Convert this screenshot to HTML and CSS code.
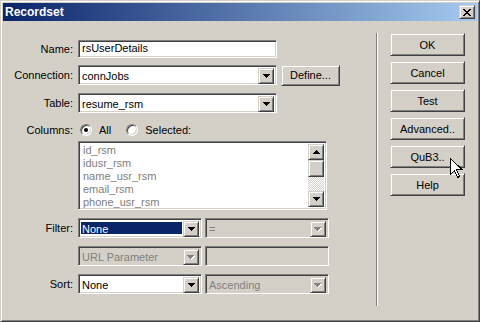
FILE: index.html
```html
<!DOCTYPE html>
<html lang="en">
<head>
    <meta charset="UTF-8">
    <meta name="viewport" content="width=device-width, initial-scale=1.0">
    <title>Recordset</title>
    <link rel="stylesheet" href="styles.css">
</head>
<body>
    <div class="window">
        <div class="titlebar">
            <span class="title">Recordset</span>
            <div class="close-btn raised">
                <svg width="8" height="7" viewBox="0 0 8 7" shape-rendering="crispEdges"><path d="M0 0h2v1h1v1h2v-1h1v-1h2v1h-1v1h-1v1h-1v1h1v1h1v1h1v1h-2v-1h-1v-1h-2v1h-1v1h-2v-1h1v-1h1v-1h1v-1h-1v-1h-1v-1h-1z" fill="#000"/></svg>
            </div>
        </div>

        <div class="dialog">
            <div class="form">
                <div class="row row-name">
                    <span class="label">Name:</span>
                    <div class="textbox sunken">rsUserDetails</div>
                </div>

                <div class="row row-select">
                    <span class="label">Connection:</span>
                    <div class="select sunken wide">
                        <span class="value">connJobs</span>
                        <span class="drop raised"><svg width="7" height="4" viewBox="0 0 7 4" shape-rendering="crispEdges"><path d="M0 0h7v1h-1v1h-1v1h-1v1h-1v-1h-1v-1h-1v-1h-1z"/></svg></span>
                    </div>
                    <div class="btn raised btn-define">Define...</div>
                </div>

                <div class="row row-select">
                    <span class="label">Table:</span>
                    <div class="select sunken wide">
                        <span class="value">resume_rsm</span>
                        <span class="drop raised"><svg width="7" height="4" viewBox="0 0 7 4" shape-rendering="crispEdges"><path d="M0 0h7v1h-1v1h-1v1h-1v1h-1v-1h-1v-1h-1v-1h-1z"/></svg></span>
                    </div>
                </div>

                <div class="row row-columns">
                    <span class="label">Columns:</span>
                    <span class="radio checked"></span>
                    <span class="radio-text">All</span>
                    <span class="radio"></span>
                    <span class="radio-text">Selected:</span>
                </div>

                <div class="row row-list">
                    <span class="label"></span>
                    <div class="listbox sunken">
                        <div class="items">
                            <div>id_rsm</div>
                            <div>idusr_rsm</div>
                            <div>name_usr_rsm</div>
                            <div>email_rsm</div>
                            <div>phone_usr_rsm</div>
                        </div>
                        <div class="scrollbar">
                            <span class="scroll-btn raised"><svg width="7" height="4" viewBox="0 0 7 4" shape-rendering="crispEdges"><path d="M3 0h1v1h1v1h1v1h1v1h-7v-1h1v-1h1v-1h1z"/></svg></span>
                            <span class="thumb raised"></span>
                            <span class="track"></span>
                            <span class="scroll-btn raised"><svg width="7" height="4" viewBox="0 0 7 4" shape-rendering="crispEdges"><path d="M0 0h7v1h-1v1h-1v1h-1v1h-1v-1h-1v-1h-1v-1h-1z"/></svg></span>
                        </div>
                    </div>
                </div>

                <div class="row row-select row-filter">
                    <span class="label">Filter:</span>
                    <div class="select sunken half">
                        <span class="value selected">None</span>
                        <span class="drop raised"><svg width="7" height="4" viewBox="0 0 7 4" shape-rendering="crispEdges"><path d="M0 0h7v1h-1v1h-1v1h-1v1h-1v-1h-1v-1h-1v-1h-1z"/></svg></span>
                    </div>
                    <div class="select sunken half disabled">
                        <span class="value">=</span>
                        <span class="drop raised"><svg width="8" height="5" viewBox="0 0 8 5" shape-rendering="crispEdges"><path d="M1 1h7v1h-1v1h-1v1h-1v1h-1v-1h-1v-1h-1v-1h-1z" fill="#fff"/><path d="M0 0h7v1h-1v1h-1v1h-1v1h-1v-1h-1v-1h-1v-1h-1z" fill="#808080"/></svg></span>
                    </div>
                </div>

                <div class="row row-select row-param">
                    <span class="label"></span>
                    <div class="select sunken half disabled">
                        <span class="value">URL Parameter</span>
                        <span class="drop raised"><svg width="8" height="5" viewBox="0 0 8 5" shape-rendering="crispEdges"><path d="M1 1h7v1h-1v1h-1v1h-1v1h-1v-1h-1v-1h-1v-1h-1z" fill="#fff"/><path d="M0 0h7v1h-1v1h-1v1h-1v1h-1v-1h-1v-1h-1v-1h-1z" fill="#808080"/></svg></span>
                    </div>
                    <div class="textbox sunken half disabled"></div>
                </div>

                <div class="row row-select row-sort">
                    <span class="label">Sort:</span>
                    <div class="select sunken half">
                        <span class="value">None</span>
                        <span class="drop raised"><svg width="7" height="4" viewBox="0 0 7 4" shape-rendering="crispEdges"><path d="M0 0h7v1h-1v1h-1v1h-1v1h-1v-1h-1v-1h-1v-1h-1z"/></svg></span>
                    </div>
                    <div class="select sunken half disabled">
                        <span class="value">Ascending</span>
                        <span class="drop raised"><svg width="8" height="5" viewBox="0 0 8 5" shape-rendering="crispEdges"><path d="M1 1h7v1h-1v1h-1v1h-1v1h-1v-1h-1v-1h-1v-1h-1z" fill="#fff"/><path d="M0 0h7v1h-1v1h-1v1h-1v1h-1v-1h-1v-1h-1v-1h-1z" fill="#808080"/></svg></span>
                    </div>
                </div>
            </div>

            <div class="separator"></div>

            <div class="actions">
                <div class="btn raised">OK</div>
                <div class="btn raised">Cancel</div>
                <div class="btn raised">Test</div>
                <div class="btn raised">Advanced..</div>
                <div class="btn raised">QuB3..</div>
                <div class="btn raised">Help</div>
            </div>
        </div>

        <svg class="cursor" width="13" height="21" viewBox="0 0 13 21" shape-rendering="crispEdges">
            <path d="M0.5 0.5v16l4-4 3 7 2-1-3-7h5.5z" fill="#fff" stroke="#000" stroke-width="1"/>
        </svg>
    </div>
</body>
</html>
```

FILE: styles.css
```css
* {
    margin: 0;
    padding: 0;
    box-sizing: border-box;
}

body {
    font-family: 'Liberation Sans', Arial, sans-serif;
    font-size: 11px;
    color: #000;
    background: #d4d0c8;
}

.window {
    position: relative;
    width: 480px;
    height: 322px;
    background: #d4d0c8;
    border: 1px solid;
    border-color: #d4d0c8 #404040 #404040 #d4d0c8;
    box-shadow: inset 1px 1px #fff, inset -1px -1px #808080;
    padding: 2px;
}

/* title bar */
.titlebar {
    height: 18px;
    display: flex;
    align-items: center;
    justify-content: space-between;
    padding: 0 2px 0 2px;
    background: linear-gradient(to right, #0a246a, #a6caf0);
}

.title {
    color: #fff;
    font-weight: bold;
    font-size: 12px;
}

.close-btn {
    width: 16px;
    height: 14px;
    display: flex;
    align-items: center;
    justify-content: center;
}

/* 3d borders */
.raised {
    background: #d4d0c8;
    border: 1px solid;
    border-color: #d4d0c8 #404040 #404040 #d4d0c8;
    box-shadow: inset 1px 1px #fff, inset -1px -1px #808080;
}

.sunken {
    border: 1px solid;
    border-color: #808080 #fff #fff #808080;
    box-shadow: inset 1px 1px #404040, inset -1px -1px #d4d0c8;
}

.dialog {
    display: flex;
}

.form {
    width: 373px;
    padding-top: 19px;
}

.row {
    display: flex;
    align-items: center;
}

.label {
    width: 75px;
    flex-shrink: 0;
    padding-right: 5px;
    text-align: right;
}

.row-name {
    height: 18px;
}

.row-select {
    height: 20px;
    margin-top: 7px;
}

.row-select + .row-select {
    margin-top: 8px;
}

.row-filter {
    margin-top: 8px;
}

.textbox {
    width: 199px;
    height: 18px;
    background: #fff;
    padding-left: 3px;
    line-height: 15px;
}

.textbox.half {
    width: 124px;
    height: 20px;
    margin-left: 3px;
}

.select {
    height: 20px;
    display: flex;
    background: #fff;
    padding: 2px;
}

.select.wide {
    width: 199px;
}

.select.half {
    width: 124px;
}

.select.half + .select.half {
    margin-left: 3px;
}

.select .value {
    flex: 1;
    line-height: 16px;
    padding-left: 1px;
    white-space: nowrap;
    overflow: hidden;
}

.select .value.selected {
    background: #0a246a;
    color: #fff;
    margin: 1px 1px 1px 0;
    line-height: 14px;
    padding-left: 1px;
}

.disabled {
    background: #d4d0c8;
    color: #808080;
}

.drop {
    width: 16px;
    height: 16px;
    display: flex;
    align-items: center;
    justify-content: center;
    flex-shrink: 0;
}

.btn {
    width: 75px;
    height: 23px;
    display: flex;
    align-items: center;
    justify-content: center;
}

.btn-define {
    width: 59px;
    height: 21px;
    margin-left: 4px;
}

/* columns radios */
.row-columns {
    height: 14px;
    margin-top: 10px;
}

.radio {
    width: 12px;
    height: 12px;
    border-radius: 50%;
    background: #fff;
    border: 1px solid;
    border-color: #808080 #fff #fff #808080;
    box-shadow: inset 1px 1px #404040, inset -1px -1px #d4d0c8;
    display: flex;
    align-items: center;
    justify-content: center;
    margin-left: 2px;
}

.radio.checked::after {
    content: '';
    width: 4px;
    height: 4px;
    border-radius: 50%;
    background: #000;
}

.radio-text {
    margin-left: 7px;
}

.radio-text + .radio {
    margin-left: 15px;
}

/* listbox */
.row-list {
    margin-top: 4px;
}

.listbox {
    width: 249px;
    height: 69px;
    background: #fff;
    display: flex;
    padding: 2px;
}

.items {
    flex: 1;
    color: #808080;
    line-height: 13px;
    padding-left: 2px;
}

.scrollbar {
    width: 16px;
    display: flex;
    flex-direction: column;
}

.scroll-btn {
    height: 16px;
    display: flex;
    align-items: center;
    justify-content: center;
}

.thumb {
    height: 17px;
}

.track {
    flex: 1;
    background: repeating-conic-gradient(#fff 0 25%, #d4d0c8 0 50%) 0 0 / 2px 2px;
}

/* right column */
.separator {
    width: 2px;
    height: 273px;
    margin-top: 12px;
    border-left: 1px solid #808080;
    border-right: 1px solid #fff;
}

.actions {
    display: flex;
    flex-direction: column;
    gap: 5px;
    padding-top: 12px;
    margin-left: 12px;
}

.cursor {
    position: absolute;
    left: 449px;
    top: 157px;
}
```
